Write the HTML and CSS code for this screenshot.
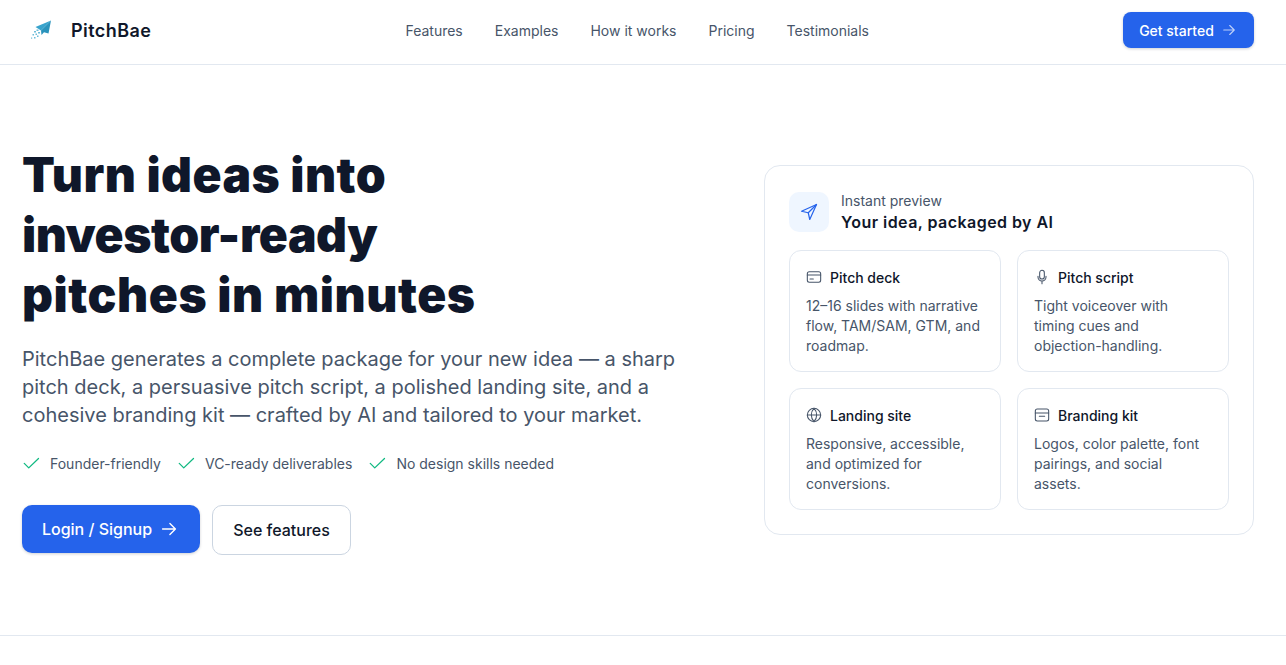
FILE: index.html
```html
<!DOCTYPE html>
<html lang="en">
<head>
    <meta charset="UTF-8">
    <meta name="viewport" content="width=device-width, initial-scale=1.0">
    <title>PitchBae</title>
    <link rel="stylesheet" href="styles.css">
</head>
<body>

    <header class="topbar">
        <a class="brand" href="#">
            <svg class="brand-logo" width="22" height="20" viewBox="0 0 22 20">
                <path d="M21 0.500 L5.500 7 L11 10.500 Z" fill="#38a3cc"/>
                <path d="M21 0.500 L11 10.500 L11.500 15 L14 12.300 L18.500 13.500 Z" fill="#2a93bc"/>
                <g fill="#6cbcd9">
                    <rect x="6.500" y="9.500" width="2" height="1.500"/>
                    <rect x="4" y="11" width="2" height="1.500"/>
                    <rect x="8" y="12" width="2" height="1.500"/>
                    <rect x="5.500" y="13.500" width="1.500" height="1.500"/>
                    <rect x="2.500" y="14" width="1.500" height="1.500"/>
                    <rect x="7" y="15.500" width="1.500" height="1.500"/>
                    <rect x="4" y="17" width="1.500" height="1.500"/>
                    <rect x="1" y="17.500" width="1.200" height="1.200"/>
                </g>
            </svg>
            <span class="brand-name">PitchBae</span>
        </a>
        <nav class="nav">
            <a href="#">Features</a>
            <a href="#">Examples</a>
            <a href="#">How it works</a>
            <a href="#">Pricing</a>
            <a href="#">Testimonials</a>
        </nav>
        <a class="btn-top" href="#">
            Get started
            <svg class="arrow" width="18" height="18" viewBox="0 0 24 24"><path d="M5 12h14M13 6l6 6-6 6"/></svg>
        </a>
    </header>

    <main class="hero">
        <section class="hero-left">
            <h1>
                <span class="line-one">Turn ideas into</span>
                <span class="line-two">investor-ready</span>
                <span class="line-three">pitches in minutes</span>
            </h1>
            <p class="lead">PitchBae generates a complete package for your new idea — a sharp pitch deck, a persuasive pitch script, a polished landing site, and a cohesive branding kit — crafted by AI and tailored to your market.</p>
            <ul class="checks">
                <li><svg class="check" width="18" height="18" viewBox="0 0 24 24"><path d="M3 12.500l6 6L22 6"/></svg>Founder-friendly</li>
                <li><svg class="check" width="18" height="18" viewBox="0 0 24 24"><path d="M3 12.500l6 6L22 6"/></svg>VC-ready deliverables</li>
                <li><svg class="check" width="18" height="18" viewBox="0 0 24 24"><path d="M3 12.500l6 6L22 6"/></svg>No design skills needed</li>
            </ul>
            <div class="actions">
                <a class="btn-primary" href="#">
                    Login / Signup
                    <svg class="arrow" width="22" height="22" viewBox="0 0 24 24"><path d="M5 12h14M13 6l6 6-6 6"/></svg>
                </a>
                <a class="btn-outline" href="#">See features</a>
            </div>
        </section>

        <aside class="preview">
            <div class="preview-head">
                <div class="preview-icon">
                    <svg width="18" height="18" viewBox="0 0 24 24"><path d="M2 11L22 2l-9 20-2-9-9-2z"/><path d="M11 13L22 2"/></svg>
                </div>
                <div>
                    <div class="preview-sub">Instant preview</div>
                    <div class="preview-title">Your idea, packaged by AI</div>
                </div>
            </div>
            <div class="cards">
                <div class="card">
                    <h3>
                        <svg class="ico" width="16" height="16" viewBox="0 0 24 24"><rect x="2" y="4" width="20" height="16" rx="3"/><path d="M2 9h20M6 15h5"/></svg>
                        Pitch deck
                    </h3>
                    <p>12–16 slides with narrative flow, TAM/SAM, GTM, and roadmap.</p>
                </div>
                <div class="card">
                    <h3>
                        <svg class="ico" width="16" height="16" viewBox="0 0 24 24"><rect x="8.500" y="2" width="7" height="13" rx="3.500"/><path d="M6 11v1a6 6 0 0 0 12 0v-1M12 18v4"/></svg>
                        Pitch script
                    </h3>
                    <p>Tight voiceover with timing cues and <span class="nowrap">objection-handling.</span></p>
                </div>
                <div class="card">
                    <h3>
                        <svg class="ico" width="16" height="16" viewBox="0 0 24 24"><circle cx="12" cy="12" r="10"/><path d="M2 12h20M12 2c3 3 4 6.500 4 10s-1 7-4 10c-3-3-4-6.500-4-10s1-7 4-10z"/></svg>
                        Landing site
                    </h3>
                    <p>Responsive, accessible, and optimized for conversions.</p>
                </div>
                <div class="card">
                    <h3>
                        <svg class="ico" width="16" height="16" viewBox="0 0 24 24"><rect x="2" y="3" width="20" height="18" rx="3"/><path d="M2 9h20M8 14h8"/></svg>
                        Branding kit
                    </h3>
                    <p>Logos, color palette, font pairings, and social assets.</p>
                </div>
            </div>
        </aside>
    </main>

</body>
</html>
```

FILE: styles.css
```css
* {
    box-sizing: border-box;
}
body {
    font-family: Inter, "Liberation Sans", sans-serif;
    margin: 0;
    padding: 0;
    background-color: white;
    color: #0f172a;
    height: 665px;
    overflow: hidden;
}
a {
    text-decoration: none;
    color: inherit;
}
svg {
    fill: none;
    stroke: currentColor;
    stroke-width: 2;
    stroke-linecap: round;
    stroke-linejoin: round;
    flex-shrink: 0;
}
.topbar {
    height: 65px;
    border-bottom: 1px solid #e2e8f0;
    display: flex;
    justify-content: space-between;
    align-items: center;
    padding: 0 32px 4px 30px;
}
.brand {
    display: flex;
    align-items: center;
    gap: 19px;
}
.brand-logo {
    stroke: none;
}
.brand-name {
    font-size: 18px;
    font-weight: 600;
    letter-spacing: 0.45px;
    color: #0f172a;
}
.nav {
    display: flex;
    gap: 32px;
    font-size: 14px;
    color: #475569;
}
.btn-top {
    width: 131px;
    height: 36px;
    display: flex;
    align-items: center;
    justify-content: center;
    gap: 6px;
    background: #2563eb;
    color: white;
    font-size: 14px;
    font-weight: 500;
    border-radius: 8px;
    box-shadow: 0 1px 3px rgba(15, 23, 42, 0.2);
}
.btn-top .arrow {
    opacity: 0.7;
    stroke-width: 1.5;
}
.hero {
    height: 571px;
    border-bottom: 1px solid #e2e8f0;
    display: flex;
    justify-content: space-between;
    padding: 80px 32px 0 22px;
}
.hero-left {
    width: 680px;
}
h1 {
    font-size: 48px;
    font-weight: 900;
    line-height: 60px;
    margin: 0;
    color: #0f172a;
}
h1 span {
    display: block;
}
.line-one {
    letter-spacing: 0.45px;
}
.line-two {
    letter-spacing: -0.45px;
}
.line-three {
    letter-spacing: 0.55px;
}
.lead {
    font-size: 20px;
    line-height: 28px;
    color: #475569;
    margin: 20px 0 0;
}
.checks {
    list-style: none;
    margin: 25px 0 0;
    padding: 0;
    display: flex;
    gap: 16px;
    font-size: 14px;
    color: #475569;
}
.checks li {
    display: flex;
    align-items: center;
    gap: 10px;
}
.check {
    color: #10b981;
    stroke-width: 1.7;
}
.actions {
    display: flex;
    align-items: flex-start;
    gap: 12px;
    margin-top: 33px;
}
.btn-primary {
    width: 178px;
    height: 48px;
    display: flex;
    align-items: center;
    justify-content: center;
    gap: 6px;
    background: #2563eb;
    color: white;
    font-size: 16px;
    font-weight: 500;
    border-radius: 10px;
    box-shadow: 0 1px 3px rgba(15, 23, 42, 0.2);
}
.btn-primary .arrow {
    stroke-width: 1.5;
}
.btn-outline {
    width: 139px;
    height: 50px;
    display: flex;
    align-items: center;
    justify-content: center;
    border: 1px solid #cbd5e1;
    border-radius: 10px;
    font-size: 16px;
    font-weight: 500;
    color: #0f172a;
}
.preview {
    width: 490px;
    height: 370px;
    margin-top: 20px;
    border: 1px solid #e2e8f0;
    border-radius: 16px;
    padding: 24px;
}
.preview-head {
    display: flex;
    align-items: center;
    gap: 12px;
}
.preview-icon {
    width: 40px;
    height: 40px;
    border-radius: 10px;
    background: #eff6ff;
    color: #2563eb;
    display: flex;
    align-items: center;
    justify-content: center;
}
.preview-icon svg {
    stroke-width: 1.6;
}
.preview-sub {
    font-size: 14px;
    line-height: 20px;
    color: #475569;
    padding-top: 1px;
}
.preview-title {
    font-size: 16px;
    line-height: 23px;
    font-weight: 600;
    letter-spacing: 0.45px;
    color: #0f172a;
}
.cards {
    display: grid;
    grid-template-columns: 212px 212px;
    gap: 16px;
    margin-top: 16px;
}
.card {
    height: 122px;
    border: 1px solid #e2e8f0;
    border-radius: 12px;
    padding: 17px 16px 16px;
}
.card h3 {
    display: flex;
    align-items: center;
    gap: 8px;
    margin: 0;
    font-size: 14px;
    line-height: 20px;
    font-weight: 500;
    color: #0f172a;
}
.ico {
    color: #475569;
    stroke-width: 1.6;
    margin-top: -3px;
}
.card p {
    margin: 8px 0 0;
    font-size: 14px;
    line-height: 20px;
    color: #475569;
}
.nowrap {
    white-space: nowrap;
}
```
